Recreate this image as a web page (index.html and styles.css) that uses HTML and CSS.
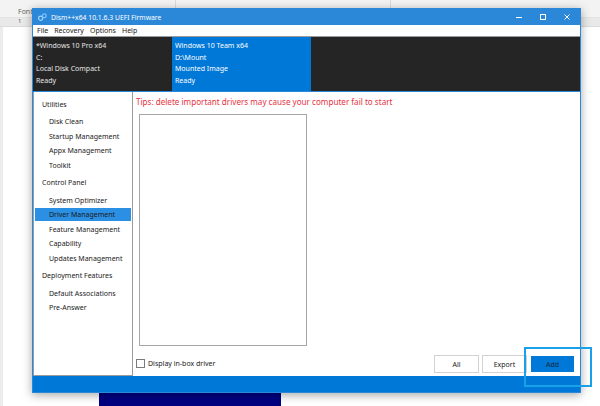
FILE: index.html
```html
<!DOCTYPE html>
<html>
<head>
<meta charset="utf-8">
<link rel="stylesheet" href="styles.css">
</head>
<body>
<div class="desk">
  <div class="ribbon">
    <span class="ribbon-label">Font</span>
    <span class="rsep rsep1"></span>
    <span class="rsep rsep2"></span>
  </div>
  <div class="ruler"><span class="rnum">1</span></div>
  <div class="doc"></div>
</div>
<div class="navy"></div>
<div class="window">
  <div class="titlebar">
    <svg class="appicon" width="9" height="8" viewBox="0 0 9 8">
      <circle cx="2.6" cy="5.2" r="2.1" fill="none" stroke="#9fd3ff" stroke-width="1.2"/>
      <circle cx="6.3" cy="2.7" r="1.9" fill="none" stroke="#7cc2ff" stroke-width="1.2"/>
    </svg>
    <span class="title">Dism++x64 10.1.6.3 UEFI Firmware</span>
    <div class="controls">
      <svg width="8" height="8" viewBox="0 0 8 8"><path d="M1 4.5H7" stroke="#fff" stroke-width="1"/></svg>
      <svg width="8" height="8" viewBox="0 0 8 8"><rect x="1.5" y="1.5" width="5" height="5" fill="none" stroke="#fff" stroke-width="1"/></svg>
      <svg width="8" height="8" viewBox="0 0 8 8"><path d="M1.5 1.5L6.5 6.5M6.5 1.5L1.5 6.5" stroke="#fff" stroke-width="1"/></svg>
    </div>
  </div>
  <div class="menubar">
    <span>File</span><span>Recovery</span><span>Options</span><span>Help</span>
  </div>
  <div class="header">
    <div class="hpanel">
      <div>*Windows 10 Pro x64</div>
      <div>C:</div>
      <div>Local Disk Compact</div>
      <div>Ready</div>
    </div>
    <div class="hpanel active">
      <div>Windows 10 Team x64</div>
      <div>D:\Mount</div>
      <div>Mounted Image</div>
      <div>Ready</div>
    </div>
  </div>
  <div class="main">
    <div class="sidebar">
      <div class="group">Utilities</div>
      <div class="item">Disk Clean</div>
      <div class="item">Startup Management</div>
      <div class="item">Appx Management</div>
      <div class="item">Toolkit</div>
      <div class="group">Control Panel</div>
      <div class="item">System Optimizer</div>
      <div class="item selected">Driver Management</div>
      <div class="item">Feature Management</div>
      <div class="item">Capability</div>
      <div class="item">Updates Management</div>
      <div class="group">Deployment Features</div>
      <div class="item">Default Associations</div>
      <div class="item">Pre-Answer</div>
    </div>
    <div class="content">
      <div class="tips">Tips: delete important drivers may cause your computer fail to start</div>
      <div class="listbox"></div>
      <div class="bottom">
        <label class="check"><span class="box"></span>Display in-box driver</label>
        <div class="buttons">
          <button class="btn">All</button>
          <button class="btn">Export</button>
          <button class="btn primary">Add</button>
        </div>
      </div>
    </div>
  </div>
  <div class="statusbar"></div>
</div>
<div class="focus"></div>
</body>
</html>
```

FILE: styles.css
```css
* { box-sizing: border-box; }
html, body { margin: 0; padding: 0; }
body {
  width: 600px;
  height: 406px;
  overflow: hidden;
  position: relative;
  font-family: "Noto Sans", "Open Sans", sans-serif;
  font-size: 7px;
  color: #1a1a1a;
  background: #fff;
}
.desk { display: flex; flex-direction: column; height: 406px; }
.ribbon {
  height: 18px;
  background: #f3f3f3;
  position: relative;
  border-bottom: 1px solid #e4e4e4;
}
.ribbon-label {
  position: absolute;
  left: 18px;
  top: 7px;
  font-size: 7px;
  color: #666;
}
.rsep { position: absolute; top: 0; height: 16px; width: 1px; background: #dadada; }
.rsep1 { left: 175px; }
.rsep2 { left: 390px; }
.ruler {
  height: 9px;
  background: #e9e9e9;
  border-bottom: 1px solid #dcdcdc;
  position: relative;
}
.rnum { position: absolute; left: 18px; top: -1px; font-size: 6px; color: #555; }
.doc { flex: 1; background: #fff; border-left: 3px solid #ececec; }

.navy {
  position: absolute;
  left: 99px;
  top: 393px;
  width: 182px;
  height: 13px;
  background: #000080;
}

.window {
  position: absolute;
  left: 32px;
  top: 8px;
  width: 549px;
  height: 385px;
  border: 1px solid #2b88d8;
  background: #fff;
  display: flex;
  flex-direction: column;
  box-shadow: 0 2px 9px rgba(0, 0, 0, 0.35);
}
.titlebar {
  height: 16px;
  background: #2b88d8;
  color: #fff;
  display: flex;
  align-items: center;
  padding-left: 5px;
  font-size: 6.8px;
}
.appicon { margin-right: 4px; }
.title { flex: 1; }
.controls {
  display: flex;
  gap: 16px;
  padding-right: 9px;
  align-items: center;
}
.controls svg { display: block; }
.menubar {
  height: 12px;
  display: flex;
  align-items: center;
  gap: 6px;
  padding-left: 4px;
  font-size: 7px;
  border-bottom: 1px solid #9a9a9a;
}
.header {
  height: 55px;
  background: #252525;
  display: flex;
  border-bottom: 1px solid #2b88d8;
}
.hpanel {
  width: 139px;
  padding: 3px 3px 0 3px;
  color: #e6e6e6;
  line-height: 11.7px;
  font-size: 7px;
}
.hpanel.active { background: #0078d7; color: #fff; }
.main { flex: 1; display: flex; min-height: 0; }
.sidebar {
  width: 100px;
  border: 1px solid #9a9a9a;
  border-top: none;
  padding: 1px 1px 0 1px;
  font-size: 7px;
}
.group {
  height: 14px;
  line-height: 14px;
  margin-top: 4.5px;
  margin-bottom: 3.5px;
  padding-left: 7px;
}
.item {
  height: 13px;
  line-height: 13px;
  margin-bottom: 1.5px;
  padding-left: 14px;
}
.item.selected { background: #2b8fe3; }
.content {
  flex: 1;
  display: flex;
  flex-direction: column;
  padding: 3px 5px 3px 3px;
}
.tips {
  color: #e8333f;
  font-size: 8.1px;
  height: 19px;
  line-height: 14px;
}
.listbox {
  width: 168px;
  height: 232px;
  margin-left: 3px;
  border: 1px solid #a6a6a6;
}
.bottom {
  flex: 1;
  display: flex;
  align-items: flex-end;
  justify-content: space-between;
}
.check {
  display: flex;
  align-items: center;
  gap: 3px;
  font-size: 7px;
  margin-bottom: 5px;
}
.box {
  width: 9px;
  height: 9px;
  border: 1px solid #7a7a7a;
  background: #fff;
}
.buttons { display: flex; gap: 3px; }
.btn {
  width: 45px;
  height: 18px;
  border: 1px solid #d2d2d2;
  background: #fff;
  font-family: "Noto Sans", "Open Sans", sans-serif;
  font-size: 7px;
  color: #1a1a1a;
  padding: 0;
}
.btn.primary {
  background: #0078d7;
  border: 1px solid #fff;
  outline: 1px solid #0078d7;
  outline-offset: -2px;
  color: #10243a;
}
.statusbar { height: 16px; background: #0078d7; }

.focus {
  position: absolute;
  left: 524px;
  top: 347px;
  width: 68px;
  height: 40px;
  border: 2px solid #18a0e8;
}
```
